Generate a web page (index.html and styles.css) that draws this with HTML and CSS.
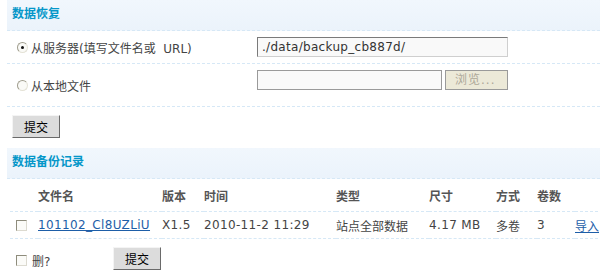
FILE: index.html
```html
<!DOCTYPE html>
<html lang="zh">
<head>
<meta charset="utf-8">
<title>数据恢复</title>
<link rel="stylesheet" href="styles.css">
</head>
<body>
<div class="panel">
  <h3 class="title">数据恢复</h3>
  <div class="frow frow-1">
    <label class="flabel"><input type="radio" class="radio" name="from" checked> 从服务器(填写文件名或&nbsp; URL)</label>
    <div class="fctrl"><input type="text" class="txt txt-url" value="./data/backup_cb887d/"></div>
  </div>
  <div class="frow frow-2">
    <label class="flabel"><input type="radio" class="radio" name="from"> 从本地文件</label>
    <div class="fctrl"><span class="txt txt-file"></span><span class="browse">浏览...</span></div>
  </div>
  <div class="actions"><button class="btn">提交</button></div>

  <h3 class="title title-2">数据备份记录</h3>
  <table class="list">
    <thead>
      <tr>
        <th class="c-chk"></th>
        <th class="c-name">文件名</th>
        <th class="c-ver">版本</th>
        <th class="c-time">时间</th>
        <th class="c-type">类型</th>
        <th class="c-size">尺寸</th>
        <th class="c-mode">方式</th>
        <th class="c-vol">卷数</th>
        <th class="c-op"></th>
      </tr>
    </thead>
    <tbody>
      <tr class="data">
        <td class="c-chk"><input type="checkbox" class="chk"></td>
        <td><a href="#" class="link lat">101102_Cl8UZLiU</a></td>
        <td class="lat">X1.5</td>
        <td class="lat">2010-11-2 11:29</td>
        <td>站点全部数据</td>
        <td class="lat">4.17 MB</td>
        <td>多卷</td>
        <td class="lat">3</td>
        <td><a href="#" class="link">导入</a></td>
      </tr>
    </tbody>
  </table>
  <div class="foot">
    <label class="del"><input type="checkbox" class="chk"><span>删?</span></label>
    <button class="btn">提交</button>
  </div>
</div>
</body>
</html>
```
FILE: styles.css
```css
html, body {
  margin: 0;
  padding: 0;
  background: #fff;
}
body {
  font-family: "DejaVu Sans", "Noto Sans CJK SC", sans-serif;
  font-size: 12px;
  color: #444;
}
.panel {
  margin-left: 7px;
  width: 593px;
}
.title {
  margin: 0;
  height: 30px;
  line-height: 29px;
  padding-left: 5px;
  font-size: 12px;
  font-weight: bold;
  color: #0597c9;
  background: linear-gradient(#f1f7fd, #ebf3fb);
  border-bottom: 1px dashed #d6e8f6;
}
.title-2 {
  margin-top: 10px;
}
.frow {
  display: flex;
  border-bottom: 1px dashed #d6e8f6;
}
.frow-1 { height: 32px; }
.frow-2 { height: 42px; }
.flabel {
  width: 250px;
  padding-left: 10px;
  box-sizing: border-box;
  display: flex;
  align-items: center;
  gap: 3px;
  color: #444;
}
.frow-2 .flabel { margin-top: 0; }
.fctrl {
  display: flex;
  align-items: flex-start;
  padding-top: 6px;
  gap: 3px;
}
.radio {
  appearance: none;
  -webkit-appearance: none;
  margin: 0;
  width: 11px;
  height: 11px;
  border-radius: 50%;
  border: 1px solid #a09e8e;
  border-right-color: #e4e2d6;
  border-bottom-color: #e4e2d6;
  background: #fafaf7;
  box-sizing: border-box;
  position: relative;
}
.radio:checked::after {
  content: "";
  position: absolute;
  left: 3px;
  top: 3px;
  width: 3px;
  height: 3px;
  border-radius: 50%;
  background: #111;
}
.txt {
  box-sizing: border-box;
  height: 20px;
  margin: 0;
  padding: 0 4px;
  font-family: "DejaVu Sans", "Noto Sans CJK SC", sans-serif;
  font-size: 12px;
  letter-spacing: 0.3px;
  color: #333;
  background: #f9f9f9;
  border: 1px solid #7a7a7a;
  border-right-color: #cfcfcf;
  border-bottom-color: #cfcfcf;
  outline: none;
}
.txt-url { width: 251px; }
.txt-file {
  display: block;
  width: 185px;
  border: 1px solid #9a9a9a;
}
.browse {
  box-sizing: border-box;
  width: 63px;
  height: 20px;
  line-height: 18px;
  padding-left: 9px;
  background: #ece9d8;
  border: 1px solid #9a9a9a;
  color: #aca899;
  letter-spacing: 1px;
}
.actions {
  padding: 8px 0 0 5px;
}
.btn {
  box-sizing: border-box;
  width: 48px;
  height: 23px;
  margin: 0;
  padding: 0;
  font-family: "Noto Sans CJK SC", sans-serif;
  font-size: 12px;
  color: #000;
  background: #dcdcdc;
  border: 1px solid #f4f4f4;
  border-right-color: #6a6a6a;
  border-bottom-color: #6a6a6a;
}
.list {
  margin-left: 3px;
  width: 588px;
  border-collapse: collapse;
  table-layout: fixed;
}
.list th, .list td {
  padding: 0;
  text-align: left;
  white-space: nowrap;
  border-bottom: 1px dashed #d6e8f6;
}
.list th {
  height: 32px;
  font-weight: bold;
  color: #555;
}
.list td { height: 26px; color: #444; }
.lat { letter-spacing: 0.35px; }
.c-chk { width: 28px; }
.c-name { width: 124px; }
.c-ver { width: 42px; }
.c-time { width: 132px; }
.c-type { width: 93px; }
.c-size { width: 67px; }
.c-mode { width: 41px; }
.c-vol { width: 38px; }
.c-op { width: 23px; }
.list td.c-chk { padding-left: 6px; }
.chk {
  appearance: none;
  -webkit-appearance: none;
  margin: 0;
  width: 11px;
  height: 11px;
  box-sizing: border-box;
  border: 1px solid #8e8c7c;
  border-right-color: #dcdad0;
  border-bottom-color: #dcdad0;
  background: #fbfbf8;
  vertical-align: middle;
  display: block;
}
.link {
  color: #1d5ea8;
  text-decoration: underline;
}
.foot {
  display: flex;
  align-items: center;
  padding: 8px 0 0 9px;
}
.del {
  display: flex;
  align-items: center;
  gap: 5px;
  width: 97px;
  margin-top: 4px;
}
```
